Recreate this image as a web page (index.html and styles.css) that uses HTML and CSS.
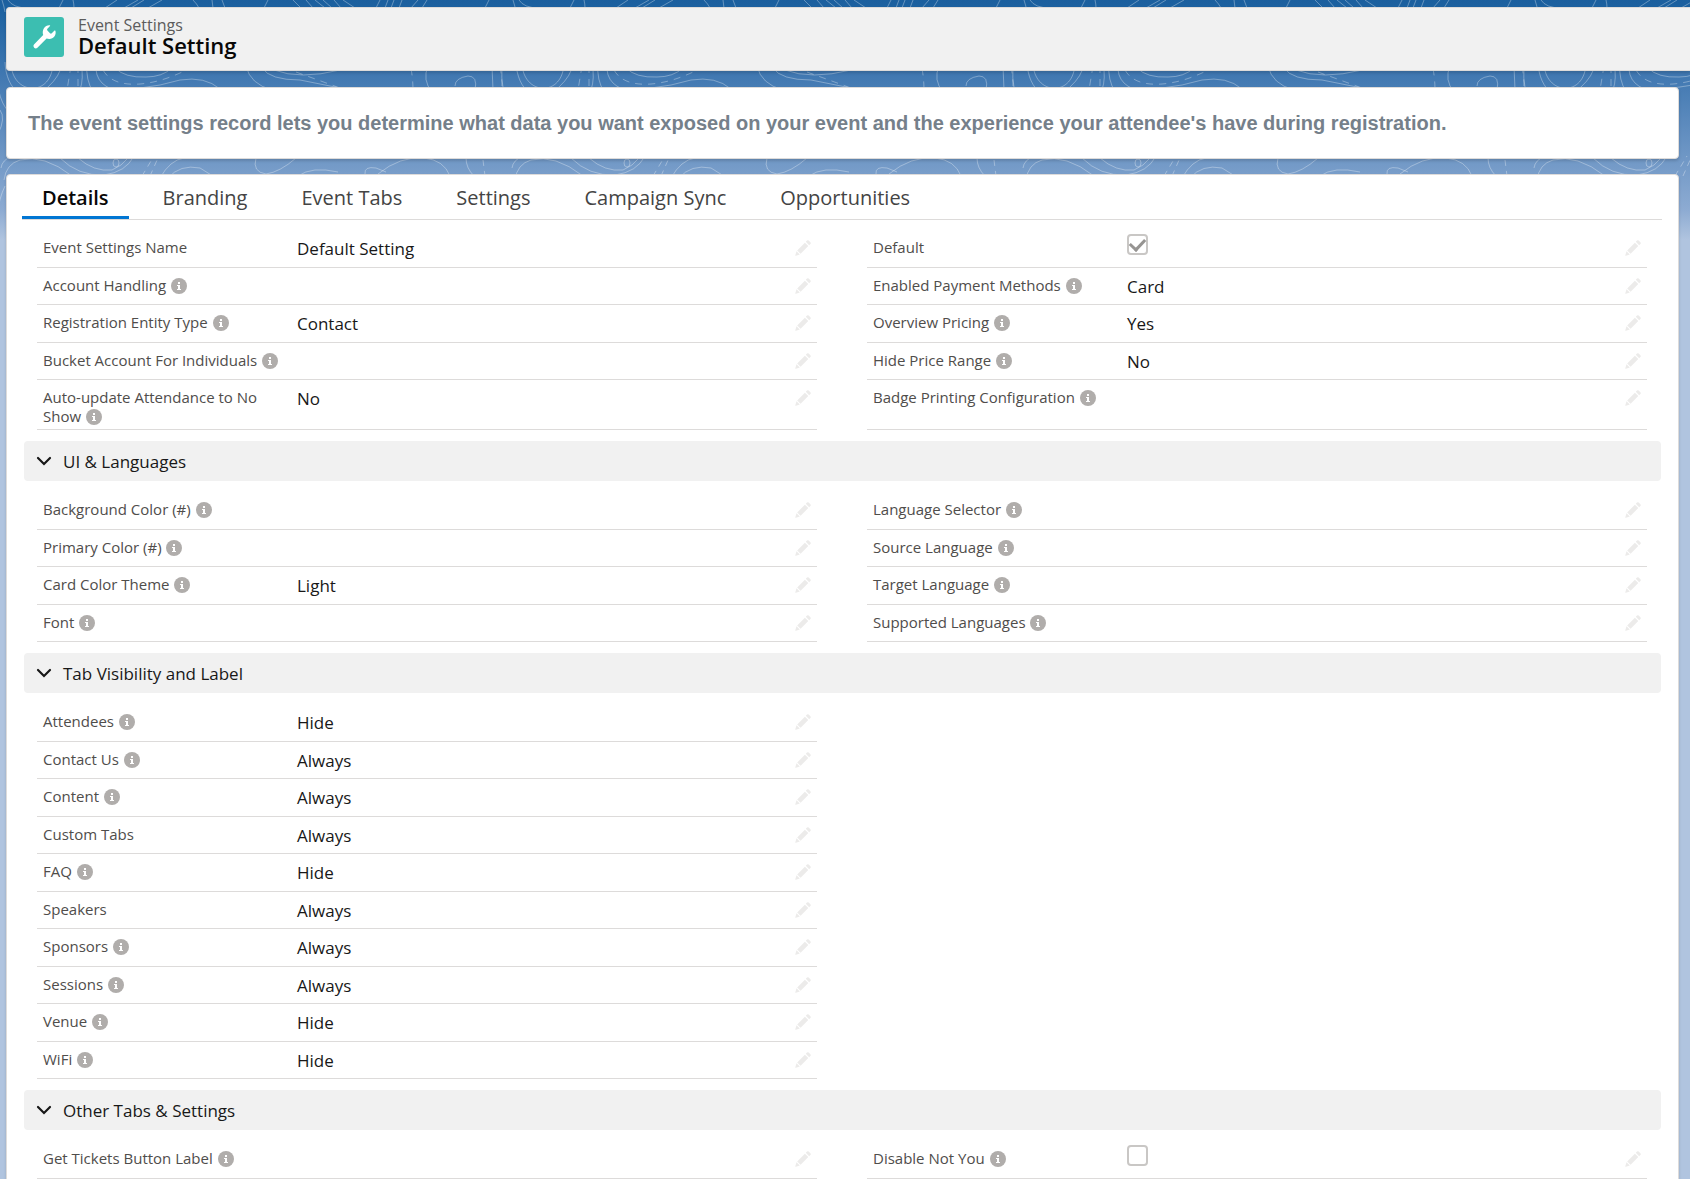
FILE: index.html
```
<!DOCTYPE html>
<html lang="en">
<head>
    <meta charset="UTF-8">
    <meta name="viewport" content="width=device-width, initial-scale=1.0">
    <title>Default Setting | Event Settings</title>
    <link rel="stylesheet" href="styles.css">
</head>
<body>
    <!-- Contour lines behind the cards -->
    <svg class="backdrop" aria-hidden="true">
        <defs>
            <pattern id="contours" width="511" height="270" patternUnits="userSpaceOnUse">
                <g fill="none" stroke="#fff" stroke-opacity="0.32">
                    <path d="M8 0q5 8 20 8M2 0q2 6 3 12M63 0l-4 8M73 0q1 4 1 8M117 0l-12 8M138 0l-14 8M144 0l-13 8M162 0l-14 8M193 0q4 4 6 8M212 0l1 8M222 0l3 8M268 0l-4 8M293 0l8 8M306 0l7 8M315 0l10 8M323 0l9 8M334 0l7 8M343 0l12 8M380 0l-4 8M388 0l-3 8M394 0l-3 8M402 0l-3 8M418 0l-7 8M427 0l-5 8M489 0l-4 8"/>
                    <path d="M11 62C11 96 53 98 53 62M5 62C6 90 26 108 48 87Q60 76 62 64M-3 62Q-5 104 14 116M511 112Q500 90 502 66"/>
                    <path d="M81 64Q84 78 80 90M87 64Q84 96 118 112M96 64Q94 88 124 92M115 68Q125 78 146 77Q162 77 172 68"/>
                    <path d="M140 88Q160 86 180 80Q205 76 220 89M246 66Q250 84 272 90M262 68Q270 80 300 80L340 88M274 70Q300 80 340 70"/>
                    <path d="M428 66Q422 80 432 92M455 86Q455 78 468 76Q478 76 475 90M492 66l1 24"/>
                    <path stroke-dasharray="7 6" d="M71 66l-4 24M78 66v26M103 70Q112 86 140 84Q164 82 190 68M296 72L340 88M411 68q2 12 2 22M500 66q2 12 2 22"/>
                    <path d="M4 180Q6 164 20 160Q44 154 72 176M60 158Q78 176 104 175Q126 172 134 156M78 158Q94 172 112 170Q122 166 128 158"/>
                    <ellipse cx="116" cy="163" rx="3" ry="4"/>
                    <path d="M160 178Q170 160 184 158M168 178Q180 164 200 168L216 178M256 158Q252 172 266 174Q280 172 296 158M298 176Q312 166 338 172"/>
                    <path d="M365 174Q364 166 376 168L386 172M378 174Q400 156 424 158Q444 160 450 176M466 158Q466 168 474 176M515 176Q516 164 524 156M1 168Q2 160 12 156"/>
                    <path stroke-dasharray="6 5" d="M142 176L154 156M150 176l8-18M483 160l2 16"/>
                    <path d="M-2 134q8-16 2-24M507 100q8 20-4 44M5 186q-6 12-8 30M507 182q-6 26-18 48M498 180q-6 20-10 34"/>
                </g>
            </pattern>
        </defs>
        <rect width="100%" height="100%" fill="url(#contours)"/>
    </svg>

    <!-- Shared icons -->
    <svg class="sprite" aria-hidden="true">
        <symbol id="icon-info" viewBox="0 0 16 16">
            <circle cx="8" cy="8" r="8" fill="#b0adab"/>
            <path d="M7 4h2v2H7zM6 7h3v4h1v1H6v-1h1V8H6z" fill="#fff"/>
        </symbol>
        <symbol id="icon-pencil" viewBox="0 0 16 16">
            <path d="M10.800 1.800L12 .6q.8-.8 1.700 0l1.700 1.700q.8.900 0 1.700L14.200 5.200zM9.900 2.700l3.400 3.400-7.700 7.700-3.400-3.400zM1.500 11.200l3.300 3.300-3.900 1.300q-.8.200-.6-.6z" fill="#ecebea"/>
        </symbol>
        <symbol id="icon-chevron" viewBox="0 0 16 16">
            <path d="M2 5l6 6 6-6" fill="none" stroke="#181818" stroke-width="2.200" stroke-linecap="round"/>
        </symbol>
    </svg>

    <header class="page-header">
        <span class="record-icon">
            <svg width="26" height="26" viewBox="0 0 26 26" aria-hidden="true">
                <path d="M18.800 1.300q.7.200.2.800l-2.600 2.700q-.8.900 0 1.800l2.600 2.700q.9.700 1.800 0l2.700-2.700q.7-.5.900.2c1.300 4.200-2 8.300-6.200 8.200-1 0-1.800-.2-2.600-.5L6.400 23.700c-1 .9-2.300.9-3.200 0-1-1-1-2.400 0-3.400l9-9.200c-1.700-5 2-10.300 6.600-9.800z" fill="#fff"/>
            </svg>
        </span>
        <div>
            <p class="object-name">Event Settings</p>
            <h1>Default Setting</h1>
        </div>
    </header>

    <section class="card intro">
        <p>The event settings record lets you determine what data you want exposed on your event and the experience your attendee's have during registration.</p>
    </section>

    <main class="card record">
        <nav class="tabs" role="tablist">
            <button type="button" role="tab" class="tab active" aria-selected="true">Details</button>
            <button type="button" role="tab" class="tab">Branding</button>
            <button type="button" role="tab" class="tab">Event Tabs</button>
            <button type="button" role="tab" class="tab">Settings</button>
            <button type="button" role="tab" class="tab">Campaign Sync</button>
            <button type="button" role="tab" class="tab">Opportunities</button>
        </nav>
        <div id="sections"></div>
    </main>

    <script>
        // Each row holds one or two fields: [label, value, has help]
        // A boolean value is drawn as a checkbox
        const sections = [
            {
                rows: [
                    [['Event Settings Name', 'Default Setting', false], ['Default', true, false]],
                    [['Account Handling', '', true], ['Enabled Payment Methods', 'Card', true]],
                    [['Registration Entity Type', 'Contact', true], ['Overview Pricing', 'Yes', true]],
                    [['Bucket Account For Individuals', '', true], ['Hide Price Range', 'No', true]],
                    [['Auto-update Attendance to No Show', 'No', true], ['Badge Printing Configuration', '', true]]
                ]
            },
            {
                title: 'UI &amp; Languages',
                rows: [
                    [['Background Color (#)', '', true], ['Language Selector', '', true]],
                    [['Primary Color (#)', '', true], ['Source Language', '', true]],
                    [['Card Color Theme', 'Light', true], ['Target Language', '', true]],
                    [['Font', '', true], ['Supported Languages', '', true]]
                ]
            },
            {
                title: 'Tab Visibility and Label',
                rows: [
                    [['Attendees', 'Hide', true]],
                    [['Contact Us', 'Always', true]],
                    [['Content', 'Always', true]],
                    [['Custom Tabs', 'Always', false]],
                    [['FAQ', 'Hide', true]],
                    [['Speakers', 'Always', false]],
                    [['Sponsors', 'Always', true]],
                    [['Sessions', 'Always', true]],
                    [['Venue', 'Hide', true]],
                    [['WiFi', 'Hide', true]]
                ]
            },
            {
                title: 'Other Tabs &amp; Settings',
                rows: [
                    [['Get Tickets Button Label', '', true], ['Disable Not You', false, true]]
                ]
            }
        ];

        function icon(name) {
            return `<svg class="icon" aria-hidden="true"><use href="#icon-${name}"/></svg>`;
        }

        function fieldHtml([label, value, help]) {
            const isCheckbox = typeof value === 'boolean';
            const id = label.toLowerCase().replace(/[^a-z]+/g, '-');
            const name = isCheckbox ? `<label for="${id}">${label}</label>` : label;
            const helpButton = help ? ` <button type="button" class="help" aria-label="Help ${label}">${icon('info')}</button>` : '';
            const content = isCheckbox
                ? `<input type="checkbox" id="${id}" ${value ? 'checked' : ''} disabled>`
                : value;

            return `
                <div class="field">
                    <div class="field-label">${name}${helpButton}</div>
                    <div class="field-value">${content}</div>
                    <button type="button" class="edit" aria-label="Edit ${label}">${icon('pencil')}</button>
                </div>`;
        }

        function sectionHtml(section) {
            const title = section.title
                ? `<h2><button type="button" class="section-title" aria-expanded="true">${icon('chevron')}${section.title}</button></h2>`
                : '';
            const rows = section.rows.map(row => `<div class="row">${row.map(fieldHtml).join('')}</div>`).join('');
            return `<section>${title}<div class="rows">${rows}</div></section>`;
        }

        document.getElementById('sections').innerHTML = sections.map(sectionHtml).join('');
    </script>
</body>
</html>
```
FILE: styles.css
```
* {
    box-sizing: border-box;
}
html {
    background: #b0c4df linear-gradient(#1b5f9e 0, #1d62a1 10px, #4279b2 78px, #759bc8 167px, #8dabd2 210px, #b0c4df 240px);
}
body {
    margin: 0;
    padding: 7px 0 0 6px;
    height: 100vh;
    overflow: hidden;
    font-family: "Open Sans", "Noto Sans", sans-serif;
    color: #181818;
}
h1, h2, p {
    margin: 0;
}
h2 {
    padding: 0 1px 0 2px;
}
button {
    padding: 0;
    border: none;
    background: none;
    font: inherit;
    color: inherit;
    cursor: pointer;
}
.sprite {
    position: absolute;
    width: 0;
    height: 0;
}
.backdrop {
    position: absolute;
    top: 0;
    left: 0;
    z-index: -1;
    width: 100%;
    height: 236px;
}
.icon {
    display: block;
    width: 16px;
    height: 16px;
}

/* Header */
.page-header {
    display: flex;
    gap: 14px;
    height: 64px;
    padding: 9px 17px;
    border: 1px solid #dddbda;
    border-right: none;
    border-radius: 4px 0 0 4px;
    background: #f1f1f1;
    box-shadow: 0 2px 3px rgba(0, 0, 0, 0.15);
}
.record-icon {
    display: flex;
    align-items: center;
    justify-content: center;
    width: 40px;
    height: 40px;
    border-radius: 3px;
    background: #3cbeb1;
}
.object-name {
    font-size: 16px;
    line-height: 16px;
    color: #5c5c5c;
}
h1 {
    font-size: 22px;
    font-weight: 600;
    line-height: 24px;
    color: #080707;
}

/* Cards */
.card {
    margin: 16px 11px 0 0;
    border: 1px solid #dddbda;
    border-radius: 4px;
    background: #fff;
    box-shadow: 0 2px 3px rgba(0, 0, 0, 0.15);
}
.intro {
    padding: 20px 21px;
    font: bold 20px/30px "Liberation Sans", Arial, sans-serif;
    color: #75808a;
}
.record {
    margin-top: 15px;
    padding: 0 16px 0 15px;
}

/* Tabs */
.tabs {
    display: flex;
    gap: 14px;
    border-bottom: 1px solid #dddbda;
}
.tab {
    height: 44px;
    padding: 3px 20px 0;
    border-bottom: 3px solid transparent;
    font-size: 20px;
    color: #444;
}
.tab.active {
    border-bottom-color: #0176d3;
    font-weight: 600;
    color: #080707;
}

/* Sections */
.section-title {
    display: flex;
    align-items: center;
    gap: 11px;
    width: 100%;
    height: 40px;
    padding: 0 12px;
    border-radius: 4px;
    background: #f1f1f1;
    font-size: 17px;
    font-weight: 400;
    text-align: left;
}
.rows {
    padding: 11px 15px;
}
section:first-child .rows {
    padding-top: 10px;
}
.row {
    display: grid;
    grid-template-columns: 1fr 1fr;
    column-gap: 50px;
    min-height: 37px;
}
.row:nth-child(odd) {
    min-height: 38px;
}
.field {
    display: grid;
    grid-template-columns: 240px 1fr 16px;
    column-gap: 14px;
    padding: 0 6px 3px;
    border-bottom: 1px solid #dddbda;
}
.field-label {
    padding-top: 8px;
    font-size: 15px;
    line-height: 19px;
    color: #4f4d4b;
}
.field-value {
    padding-top: 7px;
    font-size: 17px;
    line-height: 24px;
}
.help {
    display: inline-block;
    margin-left: 1px;
    vertical-align: -3px;
    line-height: 16px;
}
.edit {
    align-self: start;
    padding-top: 10px;
}

/* Checkbox */
input[type="checkbox"] {
    display: grid;
    place-content: center;
    appearance: none;
    width: 21px;
    height: 21px;
    margin: -3px 0 0;
    border: 2px solid #c9c7c5;
    border-radius: 4px;
    background: #fff;
}
input[type="checkbox"]:checked::before {
    content: "";
    width: 12px;
    height: 7px;
    margin-bottom: 3px;
    border: solid #969492;
    border-width: 0 0 3px 3px;
    transform: rotate(-47deg);
}
```
